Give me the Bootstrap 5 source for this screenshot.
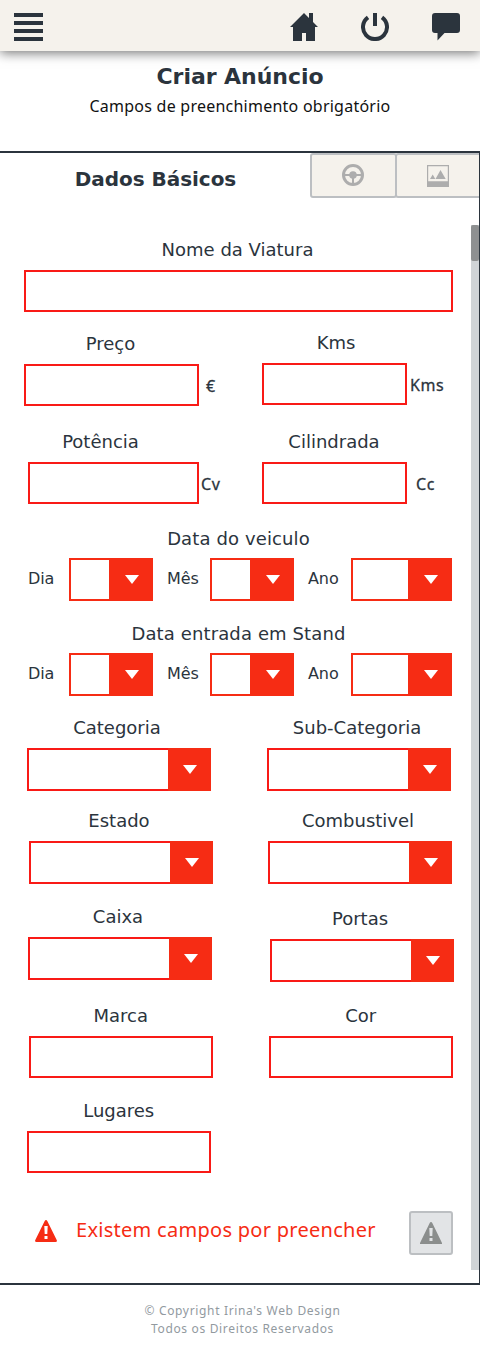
<!DOCTYPE html>
<html lang="pt">
<head>
<meta charset="utf-8">
<meta name="viewport" content="width=device-width, initial-scale=1">
<title>Criar Anúncio</title>
<link href="https://cdn.jsdelivr.net/npm/bootstrap@5.3.0/dist/css/bootstrap.min.css" rel="stylesheet">
<style>
  :root { --ink: #2b343d; --line: #f91a16; --fill: #f62c14; --cream: #f5f2ec; --edge: #bcbfc2; }
  body { font-family: "DejaVu Sans", sans-serif; color: var(--ink); background: #fff; overflow: hidden; }
  .lucida { font-family: "Noto Sans", "Open Sans", sans-serif; }
  .topbar { height: 51px; padding: 2px 20px 0 14px; gap: 43px; background: var(--cream); box-shadow: 0 2px 11px rgba(0,0,0,.55); }
  .topbar svg, .tab svg { display: block; }
  .heading { height: 100px; padding-top: 12px; }
  .heading h1 { font-size: 22px; line-height: 28px; font-weight: 700; letter-spacing: -.05px; margin: 0; }
  .heading p { font-size: 16px; line-height: 24px; letter-spacing: .24px; color: #111; margin: 3px 0 0; }
  .panel { height: 1134px; border: 2px solid var(--ink); border-width: 2px 1px 2px 0; }
  .panel-title { width: 310px; font-size: 20px; line-height: 28px; font-weight: 700; padding: 12px 0 0 1px; letter-spacing: -.05px; }
  .tab { width: 87px; height: 45px; background: var(--cream); border: 2px solid var(--edge); border-radius: 3px; }
  .tab + .tab { margin-left: -2px; width: 84px; border-right: 0; border-radius: 3px 0 0 3px; }
  .wheel { margin: 0 1px 1px 0; }
  .scroll-track { width: 8px; height: 1045px; margin-top: 27px; background: #d0d4d7; }
  .scroll-thumb { height: 36px; background: #8e9091; border-radius: 2px; }

  .field-label { display: block; font-size: 18px; line-height: 24px; margin: 0 0 8px calc(var(--shift, 0px) * 2); text-align: center; white-space: nowrap; }
  .box { display: block; width: 100%; height: 42px; border: 2px solid var(--line); background: #fff; padding: 0 8px; outline: 0; }
  .picker { height: 43px; border: 2px solid var(--line); border-right: 0; padding: 0; background: #fff; width: 184px; display: flex; justify-content: flex-end; }
  .picker::after { content: ""; width: 43px; height: 43px; margin-top: -2px; background: var(--fill) url("data:image/svg+xml,%3Csvg xmlns='http://www.w3.org/2000/svg' width='14' height='9'%3E%3Cpath d='M0 0H14L7 9Z' fill='white'/%3E%3C/svg%3E") 15px 17px no-repeat; }
  .date { --shift: 3px; }
  .date .picker { width: 84px; border-color: var(--fill); }
  .date .picker::after { width: 44px; background-position: 16px 17px; }
  .date .picker.year { width: 101px; }
  .date .field-label { margin-bottom: 7px; letter-spacing: .12px; }
  .part { width: 43px; margin-left: 14px; font-size: 16px; line-height: 24px; padding-top: 9px; letter-spacing: -.1px; }
  .part:first-child { width: 41px; margin-left: 28px; }
  .unit { font-size: 16px; line-height: 24px; -webkit-text-stroke: .3px var(--ink); letter-spacing: .6px; margin-top: 42px; }
  .unit-euro { margin: 43px 0 0 7px; width: 56px; }
  .unit-kms { margin-left: 3px; }
  .unit-cv { margin-left: 2px; width: 61px; }
  .unit-cc { margin-left: 9px; }

  .row-name { margin: 40px 0 0 24px; width: 429px; --shift: -1px; }
  .row-price { margin-top: 19px; height: 75px; padding-left: 24px; }
  .row-power { margin-top: 24px; padding-left: 28px; }
  .row-date { margin-top: 23px; }
  .row-date + .row-date { margin-top: 21px; }
  .half { width: 184px; --shift: -2px; }
  .row-cat { margin-top: 20px; padding-left: 27px; gap: 56px; }
  .row-state { margin-top: 18px; padding-left: 29px; gap: 55px; }
  .row-gear { margin-top: 21px; padding-left: 28px; height: 77px; gap: 58px; }
  .row-gear .half + .half { margin-top: 2px; }
  .row-brand { margin-top: 22px; padding-left: 29px; gap: 56px; }
  .row-seats { margin-top: 21px; padding-left: 27px; }
  .row-brand .half, .row-seats .half { --shift: -.3px; }
  .price { width: 175px; margin-top: 1px; --shift: -1px; }
  .power { width: 171px; --shift: -13px; }
  .kms { width: 145px; --shift: 1.5px; }
  .displacement { width: 145px; --shift: -.5px; }
  .alert-row { margin-top: 38px; padding-left: 35px; height: 44px; color: var(--fill); }
  .alert-icon { margin-top: 9px; }
  .alert-text { font-size: 20px; line-height: 28px; margin-left: 19px; padding-top: 5px; width: 333px; white-space: nowrap; letter-spacing: .28px; }
  .warn-btn { width: 44px; height: 44px; padding: 0; background: #e2e4e6; border: 2px solid var(--edge); border-radius: 3px; color: #8b8e8d; }
  footer { font-size: 12px; line-height: 18px; color: #929a9f; padding: 17px 0 0 5px; letter-spacing: .66px; }
</style>
</head>
<body>
<header class="topbar d-flex align-items-center position-relative">
  <svg class="me-auto" width="29" height="28" fill="#2b343d"><path d="M0 0h29v4H0zM0 8h29v4H0zM0 16h29v4H0zM0 24h29v4H0z"/></svg>
  <svg width="28" height="28" viewBox="0 0 28 28" fill="#2b343d"><path d="M14 0 0 14H3V28H12V20H16V28H25V14H28L23 9V0H19V5Z"/></svg>
  <svg width="28" height="28" viewBox="0 0 28 28" fill="none" stroke="#2b343d" stroke-width="4"><path d="M7 4.300A12 12 0 1 0 21 4.300M14 0V13"/></svg>
  <svg width="28" height="28" viewBox="0 0 28 28" fill="#2b343d"><path d="M3 0H25Q28 0 28 3V17Q28 20 25 20H12.500L5.500 27.500V20H3Q0 20 0 17V3Q0 0 3 0Z"/></svg>
</header>

<section class="heading text-center">
  <h1>Criar Anúncio</h1>
  <p class="lucida">Campos de preenchimento obrigatório</p>
</section>

<main class="panel">
  <div class="d-flex">
    <h2 class="panel-title text-center mb-0">Dados Básicos</h2>
    <a class="tab d-flex align-items-center justify-content-center" href="#" aria-label="Equipamento">
      <svg class="wheel" width="22" height="22" viewBox="0 0 22 22" fill="#adadad"><circle cx="11" cy="11" r="9.500" fill="none" stroke="#adadad" stroke-width="3"/><circle cx="11" cy="11" r="3.800"/><path d="M2 10H20V12H2zM10 12h2v8h-2z"/></svg>
    </a>
    <a class="tab d-flex align-items-center justify-content-center" href="#" aria-label="Imagens">
      <svg width="22" height="22" viewBox="0 0 22 22" fill="#adadad"><path fill-rule="evenodd" d="M0 0H22V22H0ZM1.200 1.200V16.200H20.800V1.200Z"/><path d="M3 14 5.700 9.500 8.300 14ZM8.500 14 13.500 5 18.700 14Z"/></svg>
    </a>
  </div>

  <div class="d-flex">
    <form class="flex-grow-1">
      <div class="row-name">
        <label class="field-label">Nome da Viatura</label><input class="box">
      </div>

      <div class="row-price d-flex align-items-start">
        <div class="price"><label class="field-label">Preço</label><input class="box"></div>
        <span class="unit unit-euro lucida">€</span>
        <div class="kms"><label class="field-label">Kms</label><input class="box"></div>
        <span class="unit unit-kms lucida">Kms</span>
      </div>

      <div class="row-power d-flex align-items-start">
        <div class="power"><label class="field-label">Potência</label><input class="box"></div>
        <span class="unit unit-cv lucida">Cv</span>
        <div class="displacement"><label class="field-label">Cilindrada</label><input class="box"></div>
        <span class="unit unit-cc lucida">Cc</span>
      </div>

      <div class="row-date date">
        <label class="field-label">Data do veiculo</label>
        <div class="d-flex">
          <span class="part">Dia</span><div class="picker"></div>
          <span class="part">Mês</span><div class="picker"></div>
          <span class="part">Ano</span><div class="picker year"></div>
        </div>
      </div>
      <div class="row-date date">
        <label class="field-label">Data entrada em Stand</label>
        <div class="d-flex">
          <span class="part">Dia</span><div class="picker"></div>
          <span class="part">Mês</span><div class="picker"></div>
          <span class="part">Ano</span><div class="picker year"></div>
        </div>
      </div>

      <div class="row-cat d-flex">
        <div class="half"><label class="field-label">Categoria</label><div class="picker"></div></div>
        <div class="half"><label class="field-label">Sub-Categoria</label><div class="picker"></div></div>
      </div>
      <div class="row-state d-flex">
        <div class="half"><label class="field-label">Estado</label><div class="picker"></div></div>
        <div class="half"><label class="field-label">Combustivel</label><div class="picker"></div></div>
      </div>
      <div class="row-gear d-flex">
        <div class="half"><label class="field-label">Caixa</label><div class="picker"></div></div>
        <div class="half"><label class="field-label">Portas</label><div class="picker"></div></div>
      </div>
      <div class="row-brand d-flex">
        <div class="half"><label class="field-label">Marca</label><input class="box"></div>
        <div class="half"><label class="field-label">Cor</label><input class="box"></div>
      </div>
      <div class="row-seats d-flex">
        <div class="half"><label class="field-label">Lugares</label><input class="box"></div>
      </div>

      <div class="alert-row d-flex">
        <svg class="alert-icon" width="22" height="22" viewBox="0 0 22 22" fill="currentColor"><path fill-rule="evenodd" d="M11 0Q11.800 0 12.300 1L21.700 20Q22.500 22 20.500 22H1.500Q-.5 22 .3 20L9.700 1Q10.200 0 11 0ZM9.300 6 9.700 14H12.300L12.700 6ZM9.500 16V19H12.500V16Z"/></svg>
        <span class="alert-text lucida">Existem campos por preencher</span>
        <button type="button" class="warn-btn d-flex align-items-center justify-content-center" aria-label="Aviso">
          <svg width="22" height="22" viewBox="0 0 22 22" fill="currentColor"><path fill-rule="evenodd" d="M11 0Q11.800 0 12.300 1L22 21V22H0V21L9.700 1Q10.200 0 11 0ZM9.300 6 9.700 14H12.300L12.700 6ZM9.500 16V19H12.500V16Z"/></svg>
        </button>
      </div>
    </form>
    <div class="scroll-track"><div class="scroll-thumb"></div></div>
  </div>
</main>

<footer class="lucida text-center">© Copyright Irina's Web Design<br>Todos os Direitos Reservados</footer>
<script src="https://cdn.jsdelivr.net/npm/bootstrap@5.3.0/dist/js/bootstrap.bundle.min.js"></script>
</body>
</html>
